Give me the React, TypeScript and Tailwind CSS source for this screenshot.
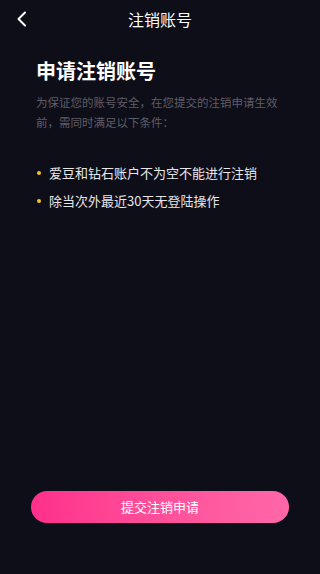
export default function App() {
  const font = { fontFamily: '"Noto Sans CJK SC", "Noto Sans", sans-serif' };
  return (
    <div className="w-[320px] h-[574px] bg-[#0e0e18] flex flex-col" style={font}>
      <div className="h-[38px] flex items-center relative shrink-0">
        <div className="pl-[16px] flex items-center">
          <svg width="11" height="16" viewBox="0 0 11 16" fill="none">
            <path d="M9 1.5L2.5 8L9 14.5" stroke="white" strokeWidth="2" strokeLinecap="round" strokeLinejoin="round" />
          </svg>
        </div>
        <div className="absolute inset-0 flex items-center justify-center text-white text-[16px] leading-none pointer-events-none">
          注销账号
        </div>
      </div>
      <div className="pl-[36px] pr-[28px] pt-[19px] flex-1 flex flex-col">
        <div className="text-white text-[20px] font-bold leading-[28px]">申请注销账号</div>
        <div className="mt-[7px] text-[#5d5d6a] text-[11.5px] leading-[20px]">
          为保证您的账号安全，在您提交的注销申请生效前，需同时满足以下条件：
        </div>
        <div className="mt-[31px] flex flex-col gap-[9px]">
          {["爱豆和钻石账户不为空不能进行注销", "除当次外最近30天无登陆操作"].map((t) => (
            <div key={t} className="flex items-center text-[#e6e6ea] text-[13px] leading-[19px]">
              <span className="w-[4px] h-[4px] rounded-full bg-[#f8c21c] ml-[1px] mr-[8px] shrink-0" />
              {t}
            </div>
          ))}
        </div>
        <div className="flex-1" />
      </div>
      <div className="px-[31px] pb-[51px]">
        <div className="h-[32px] rounded-full bg-gradient-to-r from-[#ff2f8b] to-[#ff67a9] flex items-center justify-center text-white text-[13px]">
          提交注销申请
        </div>
      </div>
    </div>
  );
}
